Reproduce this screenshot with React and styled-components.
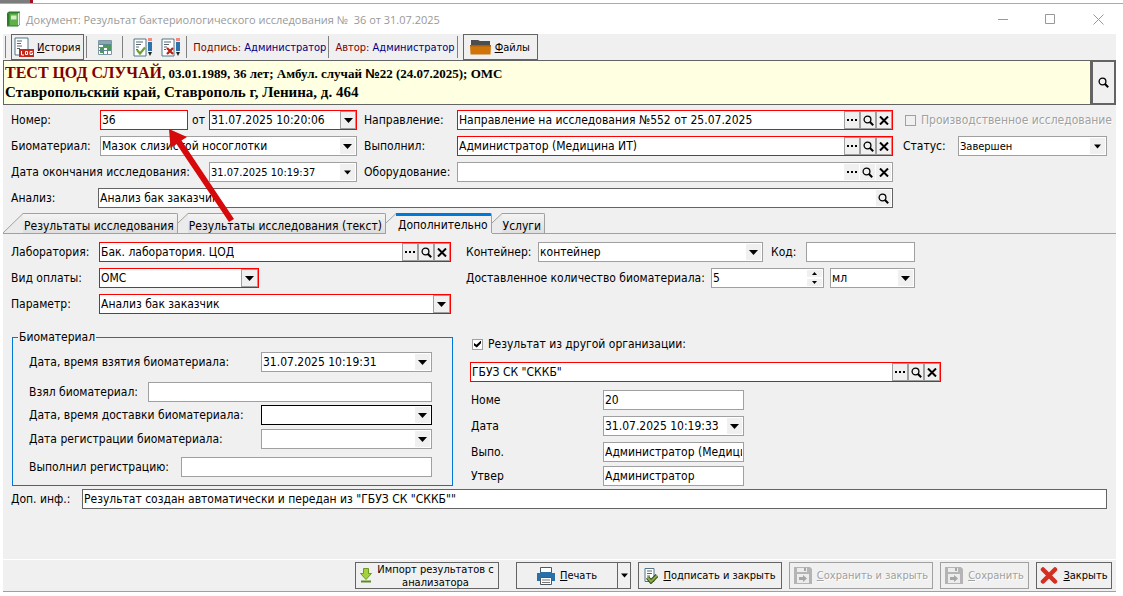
import React, { useState } from 'react'
import styled, { createGlobalStyle } from 'styled-components'

const UI_FONT = 'Tahoma, "DejaVu Sans Condensed", "DejaVu Sans", sans-serif'

const borders = {
    normal: '#a0a0a0',
    required: '#ff0000',
    strong: '#646464',
    focus: '#000000',
}

const ArrowDown = ({ size = 9 }) => (
    <svg width={size} height="5" viewBox="0 0 9 5">
        <path d="M0 0h9L4.500 5z" fill="#000" />
    </svg>
)

const Loupe = () => (
    <svg width="11" height="11" viewBox="0 0 11 11" fill="none" stroke="#000">
        <circle cx="4.500" cy="4.500" r="3.400" strokeWidth="1.300" />
        <path d="M7 7L10.200 10.200" strokeWidth="2" />
    </svg>
)

const Cross = () => (
    <svg width="10" height="9" viewBox="0 0 10 9" fill="none" stroke="#000" strokeWidth="2">
        <path d="M1 0.500L9 8.500M9 0.500L1 8.500" />
    </svg>
)

const Dots = () => (
    <svg width="10" height="4" viewBox="0 0 10 4">
        <path d="M0 1h2v2H0zM4 1h2v2H4zM8 1h2v2H8z" fill="#000" />
    </svg>
)

const BookIcon = () => (
    <svg width="15" height="16" viewBox="0 0 15 16">
        <path d="M1 2l2-1.500h11v13L12 15.500H1z" fill="#2f7d2c" />
        <path d="M12 2.500l1.500-1v12L12 14.500z" fill="#e8f3e4" />
        <path d="M1 2.500h11v12H1z" fill="#5fb04a" />
        <path d="M1 2.500h2.500v12H1z" fill="#2d7a2a" />
        <path d="M5 4.500h5.500v4H5z" fill="#d3efc2" />
    </svg>
)

const LogIcon = () => (
    <svg width="20" height="20" viewBox="0 0 20 20">
        <path d="M1 1h13v17H1z" fill="#fff" stroke="#4f7688" />
        <path d="M3 4h5M3 6.500h4M3 9h5M3 11.500h3" stroke="#59646b" />
        <path d="M5 12h15v8H5z" fill="#c4281c" />
        <path d="M7.500 14v4H10M11.500 14.500h2v3h-2zM18.500 14.500h-2.500v3h2.500V16h-1" fill="none" stroke="#fff" />
    </svg>
)

const TableIcon = () => (
    <svg width="14" height="15" viewBox="0 0 14 15">
        <path d="M0.500 0.500h13v14H0.500z" fill="#fff" stroke="#7d98a3" />
        <path d="M1 1h12v3H1z" fill="#8aa9b5" />
        <path d="M6 5h7v2H6zM2 8h3v2H2zM10 8h3v2h-3zM2 11h3v2H2z" fill="#4b9a57" />
        <path d="M1 4.500h12M1 7.500h12M1 10.500h12M5.500 4v10M9.500 4v10" stroke="#5f8792" />
    </svg>
)

const SheetPenIcon = ({ rejected }) => (
    <svg width="19" height="19" viewBox="0 0 19 19">
        <path d="M1 1h12v17H1z" fill="#fff" stroke="#4f7688" />
        <path d="M3 4h7M3 6.500h5M3 9h3M3 11.500h2" stroke="#59646b" />
        {rejected
            ? <path d="M6 10l6 6M12 10l-6 6" fill="none" stroke="#b52218" strokeWidth="2.200" />
            : <path d="M4 12l3 3.500L12 9.500" fill="none" stroke="#6d9f38" strokeWidth="2.200" />}
        <path d="M15 0h4v3h-4z" fill="#ef8b80" />
        <path d="M15 4h4v9h-4z" fill="#2c73ad" />
        <path d="M15 14h4l-2 4z" fill="#222" />
    </svg>
)

const FolderIcon = () => (
    <svg width="21" height="16" viewBox="0 0 21 16">
        <path d="M1 1h7l2 1h10V14H1z" fill="#4d4d4d" />
        <path d="M0 6h21L20.500 15.500H0.500z" fill="#cf7408" />
        <path d="M0 6h21v1.500H0z" fill="#a8600e" />
    </svg>
)

const ImportIcon = () => (
    <svg width="12" height="15" viewBox="0 0 12 15">
        <path d="M3.500 0.500h5v5h3L6 11.500 0.500 5.500h3z" fill="#a6d13f" stroke="#6b9a23" />
        <path d="M1 13.500h10" stroke="#5b8f22" strokeWidth="2" />
    </svg>
)

const PrinterIcon = () => (
    <svg width="18" height="18" viewBox="0 0 18 18">
        <path d="M3.500 0.500h11v6h-11z" fill="#fff" stroke="#4d5960" />
        <path d="M0 6h3v-1h12v1h3v8H0z" fill="#2a70a8" />
        <path d="M3.500 10.500h11v7h-11z" fill="#fff" stroke="#4d5960" />
        <path d="M5 13h8M5 15.500h8" stroke="#777" />
    </svg>
)

const SignIcon = () => (
    <svg width="14" height="16" viewBox="0 0 14 16">
        <path d="M1 0.500h9v13H1z" fill="#fff" stroke="#4f7688" />
        <path d="M3 3h5M3 5.500h5M3 8h3" stroke="#59646b" />
        <path d="M3.500 9.500L7 13.500l6-6" fill="none" stroke="#33461d" strokeWidth="4" />
        <path d="M3.500 9.500L7 13.500l6-6" fill="none" stroke="#85ae45" strokeWidth="2" />
    </svg>
)

const DiskIcon = () => (
    <svg width="18" height="17" viewBox="0 0 18 17">
        <path d="M0 0h16l2 2v15H0z" fill="#b4b4b4" />
        <path d="M3 1h10v4H3zM3 7h12v9H3z" fill="#ececec" />
        <path d="M10 1h2v3h-2z" fill="#a5a5a5" />
        <path d="M5 10h4V8l4 3.500L9 15v-2H5z" fill="#a5a5a5" />
    </svg>
)

const CloseIcon = () => (
    <svg width="18" height="17" viewBox="0 0 18 17">
        <path d="M3 2.500L15 14.500M15 2.500L3 14.500" fill="none" stroke="#d33022" strokeWidth="4.500" strokeLinecap="round" />
    </svg>
)

const Lookup = ({ id, defaultValue = '', kind = 'normal', flat, single }) => (
    <Box $kind={kind}>
        <Input id={id} type="text" defaultValue={defaultValue} />
        {!single && <BoxButton type="button" aria-label="Выбрать" $flat={flat}><Dots /></BoxButton>}
        <BoxButton type="button" aria-label="Найти" $flat={flat}><Loupe /></BoxButton>
        {!single && <BoxButton type="button" aria-label="Очистить" $flat={flat}><Cross /></BoxButton>}
    </Box>
)

const DateField = ({ id, defaultValue = '', kind = 'normal', width, small }) => (
    <Box $kind={kind} $width={width}>
        <Input id={id} type="text" defaultValue={defaultValue} $small={small} />
        <BoxButton type="button" aria-label="Календарь" $flat={kind !== 'required'}><ArrowDown size={small ? 7 : 9} /></BoxButton>
    </Box>
)

const Combo = ({ id, value, kind = 'normal', width, small, label }) => (
    <ComboBox $kind={kind} $width={width}>
        <Select id={id} defaultValue={value} $small={small} aria-label={label}>
            <option>{value}</option>
        </Select>
        <ComboArrow $flat={kind !== 'required'}><ArrowDown size={small ? 7 : 9} /></ComboArrow>
    </ComboBox>
)

const TextField = ({ id, defaultValue = '', kind = 'normal', width }) => (
    <Box $kind={kind} $width={width}>
        <Input id={id} type="text" defaultValue={defaultValue} />
    </Box>
)

const tabs = ['Результаты исследования', 'Результаты исследования (текст)', 'Дополнительно', 'Услуги']

const App = () => {
    const [tab, setTab] = useState(2)
    const [external, setExternal] = useState(true)

    return (
        <>
            <GlobalStyle />
            <Page>
                <Backdrop><BackdropDark /><BackdropRed /></Backdrop>
                <TitleBar>
                    <BookIcon />
                    <Title>Документ: Результат бактериологического исследования №&nbsp; 36 от 31.07.2025</Title>
                    <WindowButton type="button" aria-label="Свернуть">
                        <svg width="11" height="11" viewBox="0 0 11 11"><path d="M0 5.500h10" stroke="#999" /></svg>
                    </WindowButton>
                    <WindowButton type="button" aria-label="Развернуть">
                        <svg width="11" height="11" viewBox="0 0 11 11"><path d="M0.500 0.500h9v9H0.500z" fill="none" stroke="#999" /></svg>
                    </WindowButton>
                    <WindowButton type="button" aria-label="Закрыть окно">
                        <svg width="11" height="11" viewBox="0 0 11 11"><path d="M0.500 0.500l10 10M10.500 0.500l-10 10" stroke="#999" /></svg>
                    </WindowButton>
                </TitleBar>

                <Body>
                    <Toolbar>
                        <Separator />
                        <ToolButton type="button"><LogIcon /><span><u>И</u>стория</span></ToolButton>
                        <Separator />
                        <IconButton type="button" aria-label="Таблица" $wide><TableIcon /></IconButton>
                        <Separator />
                        <IconGroup>
                            <IconButton type="button" aria-label="Подписать"><SheetPenIcon /></IconButton>
                            <IconButton type="button" aria-label="Снять подпись"><SheetPenIcon rejected /></IconButton>
                        </IconGroup>
                        <Separator />
                        <Person><b>Подпись:</b> Администратор</Person>
                        <Separator />
                        <Person><b>Автор:</b> Администратор</Person>
                        <Separator />
                        <ToolButton type="button"><FolderIcon /><span><u>Ф</u>айлы</span></ToolButton>
                    </Toolbar>

                    <PatientBar>
                        <Patient>
                            <PatientLine>
                                <PatientName>ТЕСТ ЦОД СЛУЧАЙ</PatientName>, 03.01.1989, 36 лет; Амбул. случай <NumberSign>№</NumberSign>22 (24.07.2025); ОМС
                            </PatientLine>
                            <Address>Ставропольский край, Ставрополь г, Ленина, д. 464</Address>
                        </Patient>
                        <PatientSearch type="button" aria-label="Найти пациента"><Loupe /></PatientSearch>
                    </PatientBar>

                    <Header>
                        <HeaderMain>
                            <HeaderColumns>
                                <Column>
                                    <Row>
                                        <Label htmlFor="number" $width={89}>Номер:</Label>
                                        <TextField id="number" defaultValue="36" kind="required" />
                                        <Between htmlFor="date">от</Between>
                                        <DateField id="date" defaultValue="31.07.2025 10:20:06" kind="required" width={148} />
                                    </Row>
                                    <Row>
                                        <Label htmlFor="material" $width={89}>Биоматериал:</Label>
                                        <Combo id="material" value="Мазок слизистой носоглотки" />
                                    </Row>
                                    <Row>
                                        <Label htmlFor="finished" $width={198}>Дата окончания исследования:</Label>
                                        <DateField id="finished" defaultValue="31.07.2025 10:19:37" small />
                                    </Row>
                                </Column>
                                <Column>
                                    <Row>
                                        <Label htmlFor="referral" $width={93}>Направление:</Label>
                                        <Lookup id="referral" defaultValue="Направление на исследования №552 от 25.07.2025" kind="required" />
                                    </Row>
                                    <Row>
                                        <Label htmlFor="performer" $width={93}>Выполнил:</Label>
                                        <Lookup id="performer" defaultValue="Администратор (Медицина ИТ)" kind="required" />
                                    </Row>
                                    <Row>
                                        <Label htmlFor="equipment" $width={93}>Оборудование:</Label>
                                        <Lookup id="equipment" flat />
                                    </Row>
                                </Column>
                            </HeaderColumns>
                            <Row>
                                <Label htmlFor="analysis" $width={87}>Анализ:</Label>
                                <Lookup id="analysis" defaultValue="Анализ бак заказчик" kind="strong" flat single />
                            </Row>
                        </HeaderMain>
                        <HeaderSide>
                            <Row>
                                <CheckLabel $disabled>
                                    <Checkbox type="checkbox" disabled />
                                    Производственное исследование
                                </CheckLabel>
                            </Row>
                            <Row>
                                <Label htmlFor="status" $width={55}>Статус:</Label>
                                <Combo id="status" value="Завершен" width={149} small />
                            </Row>
                        </HeaderSide>
                    </Header>

                    <TabList role="tablist">
                        {tabs.map((name, i) => (
                            <Tab key={name} type="button" role="tab" aria-selected={i === tab} onClick={() => setTab(i)}>
                                <svg width={i === 0 ? 20 : 10} viewBox={i === 0 ? '0 0 20 20' : '0 0 10 20'} height="20">
                                    <path d={i === 0 ? 'M0 20L20 0V20z' : 'M0 10L10 0V20H0z'} fill={i === tab ? '#f0f0f0' : '#ebebeb'} />
                                    <path d={i === 0 ? 'M0 20L20 0.500' : 'M0 10L10 0.500'} stroke="#a0a0a0" fill="none" />
                                </svg>
                                <TabText $active={i === tab}>{name}</TabText>
                            </Tab>
                        ))}
                        <TabRest />
                    </TabList>

                    <Panel>
                        <PanelColumns>
                            <PanelLeft>
                                <Column>
                                    <Row>
                                        <Label htmlFor="lab" $width={88}>Лаборатория:</Label>
                                        <Lookup id="lab" defaultValue="Бак. лаборатория. ЦОД" kind="required" />
                                    </Row>
                                    <Row>
                                        <Label htmlFor="payment" $width={88}>Вид оплаты:</Label>
                                        <Combo id="payment" value="ОМС" kind="required" width={160} />
                                    </Row>
                                    <Row>
                                        <Label htmlFor="parameter" $width={88}>Параметр:</Label>
                                        <Combo id="parameter" value="Анализ бак заказчик" kind="required" />
                                    </Row>
                                </Column>
                                <Group>
                                    <legend>Биоматериал</legend>
                                    <Row>
                                        <Label htmlFor="taken" $width={232}>Дата, время взятия биоматериала:</Label>
                                        <DateField id="taken" defaultValue="31.07.2025 10:19:31" />
                                    </Row>
                                    <Row $space={10}>
                                        <Label htmlFor="takenBy" $width={119}>Взял биоматериал:</Label>
                                        <TextField id="takenBy" />
                                    </Row>
                                    <Row $space={3}>
                                        <Label htmlFor="delivered" $width={232}>Дата, время доставки биоматериала:</Label>
                                        <DateField id="delivered" kind="focus" />
                                    </Row>
                                    <Row $space={4}>
                                        <Label htmlFor="registered" $width={232}>Дата регистрации биоматериала:</Label>
                                        <DateField id="registered" />
                                    </Row>
                                    <Row $space={8}>
                                        <Label htmlFor="registeredBy" $width={152}>Выполнил регистрацию:</Label>
                                        <TextField id="registeredBy" />
                                    </Row>
                                </Group>
                            </PanelLeft>

                            <PanelRight>
                                <Column>
                                    <Row>
                                        <Label htmlFor="container" $width={72}>Контейнер:</Label>
                                        <Combo id="container" value="контейнер" width={225} />
                                        <Label htmlFor="code" $width={43} $inset>Код:</Label>
                                        <TextField id="code" width={109} />
                                    </Row>
                                    <Row>
                                        <Label htmlFor="amount" $width={245}>Доставленное количество биоматериала:</Label>
                                        <Box $kind="normal" $width={113}>
                                            <Input id="amount" type="text" inputMode="numeric" defaultValue="5" />
                                            <Spin>
                                                <button type="button" aria-label="Больше"><svg width="5" height="3" viewBox="0 0 5 3"><path d="M0 3h5L2.500 0z" /></svg></button>
                                                <button type="button" aria-label="Меньше"><svg width="5" height="3" viewBox="0 0 5 3"><path d="M0 0h5L2.500 3z" /></svg></button>
                                            </Spin>
                                        </Box>
                                        <UnitGap />
                                        <Combo id="unit" value="мл" width={85} label="Единица измерения" />
                                    </Row>
                                </Column>
                                <External>
                                    <CheckLabel>
                                        <Checkbox type="checkbox" checked={external} onChange={(e) => setExternal(e.target.checked)} />
                                        Результат из другой организации:
                                    </CheckLabel>
                                    <Row $space={8}>
                                        <Lookup id="organization" defaultValue={'ГБУЗ СК "СККБ"'} kind="required" />
                                    </Row>
                                    <Row $space={8}>
                                        <ShortLabel htmlFor="extNumber">Номе</ShortLabel>
                                        <TextField id="extNumber" defaultValue="20" width={141} />
                                    </Row>
                                    <Row $space={6}>
                                        <ShortLabel htmlFor="extDate">Дата</ShortLabel>
                                        <DateField id="extDate" defaultValue="31.07.2025 10:19:33" width={141} />
                                    </Row>
                                    <Row $space={6}>
                                        <ShortLabel htmlFor="extPerformer">Выпо.</ShortLabel>
                                        <TextField id="extPerformer" defaultValue="Администратор (Медицина ИТ)" width={141} />
                                    </Row>
                                    <Row $space={4}>
                                        <ShortLabel htmlFor="extApproved">Утвер</ShortLabel>
                                        <TextField id="extApproved" defaultValue="Администратор" width={141} />
                                    </Row>
                                </External>
                            </PanelRight>
                        </PanelColumns>
                        <Row>
                            <Label htmlFor="extra" $width={71}>Доп. инф.:</Label>
                            <TextField id="extra" defaultValue={'Результат создан автоматически и передан из "ГБУЗ СК "СККБ""'} kind="strong" />
                        </Row>
                    </Panel>

                    <Footer>
                        <FooterButton type="button" $width={144}>
                            <ImportIcon />
                            <TwoLines>Импорт результатов с анализатора</TwoLines>
                        </FooterButton>
                        <Split>
                            <FooterButton type="button" $width={102}><PrinterIcon /><span><u>П</u>ечать</span></FooterButton>
                            <SplitArrow type="button" aria-label="Варианты печати"><ArrowDown size={7} /></SplitArrow>
                        </Split>
                        <FooterButton type="button" $width={144}><SignIcon /><span><u>П</u>одписать и закрыть</span></FooterButton>
                        <FooterButton type="button" disabled $width={144}><DiskIcon /><span><u>С</u>охранить и закрыть</span></FooterButton>
                        <FooterButton type="button" disabled $width={89}><DiskIcon /><span><u>С</u>охранить</span></FooterButton>
                        <FooterButton type="button" $width={76}><CloseIcon /><span><u>З</u>акрыть</span></FooterButton>
                    </Footer>
                </Body>

                <Pointer width="70" height="98" viewBox="0 0 70 98">
                    <path d="M4 4L22 12 16.500 15.500 69 94 64 97 11.500 19 5.500 23z" fill="#d60a0a" />
                </Pointer>
            </Page>
        </>
    )
}

export default App

const GlobalStyle = createGlobalStyle`
    * {
        box-sizing: border-box;
    }
    body {
        margin: 0;
        background: #fff;
        font-family: ${UI_FONT};
        font-size: 12px;
        color: #000;
    }
    button, input, select {
        font-family: inherit;
        font-size: inherit;
        color: inherit;
        margin: 0;
        padding: 0;
        border: none;
        border-radius: 0;
        background: none;
    }
    svg {
        display: block;
        flex: none;
    }
`
const Page = styled.div`
    position: relative;
    min-height: 100vh;
    display: flex;
    flex-direction: column;
    padding: 0 7px 4px 3px;
`
const Backdrop = styled.div`
    display: flex;
    height: 4px;
    margin: 0 -7px 0 -3px;
    border-bottom: 1px solid #aaa;
`
const BackdropDark = styled.div`
    width: 30px;
    background: #7c7c7c;
`
const BackdropRed = styled.div`
    width: 3px;
    background: #a01020;
`
const TitleBar = styled.header`
    height: 30px;
    display: flex;
    align-items: center;
    padding-left: 3px;
`
const Title = styled.h1`
    flex: 1;
    margin: 0 0 0 5px;
    font-family: "Segoe UI", "Open Sans", sans-serif;
    font-size: 11px;
    font-weight: normal;
    color: #999;
    white-space: nowrap;
`
const WindowButton = styled.button`
    width: 47px;
    height: 30px;
    display: flex;
    align-items: center;
    justify-content: center;
    &:last-child {
        width: 36px;
        margin-left: 6px;
    }
`
const Body = styled.main`
    flex: 1;
    display: flex;
    flex-direction: column;
    background: #f0f0f0;
    border-bottom: 1px solid #a0a0a0;
`
const Toolbar = styled.div`
    height: 26px;
    display: flex;
    align-items: center;
    padding-left: 2px;
    font-size: 11px;
`
const Separator = styled.div`
    width: 1px;
    height: 22px;
    background: #808080;
`
const ToolButton = styled.button`
    height: 26px;
    display: flex;
    align-items: center;
    gap: 3px;
    margin: 0 2px 0 5px;
    padding: 0 3px 0 2px;
    border: 1px solid #646464;
    &:last-child {
        gap: 4px;
        padding: 0 7px 0 6px;
    }
`
const IconGroup = styled.div`
    display: flex;
    padding: 0 2px 0 5px;
`
const IconButton = styled.button`
    height: 26px;
    width: ${(p) => (p.$wide ? 35 : 28)}px;
    display: flex;
    align-items: center;
    justify-content: center;
`
const Person = styled.div`
    padding: 0 2px 0 6px;
    color: #000080;
    white-space: pre;
    b {
        font-weight: normal;
        color: #800000;
    }
`
const PatientBar = styled.div`
    display: flex;
    height: 45px;
`
const Patient = styled.div`
    flex: 1;
    background: #ffffe1;
    border: 1px solid #646464;
    padding: 2px 1px;
    font-family: "Times New Roman", "Liberation Serif", serif;
    font-weight: bold;
    white-space: nowrap;
`
const PatientLine = styled.div`
    font-size: 13px;
    line-height: 20px;
`
const PatientName = styled.span`
    font-size: 16px;
    color: #800000;
`
const NumberSign = styled.span`
    font-family: Arial, "Liberation Sans", sans-serif;
`
const Address = styled.div`
    font-size: 15px;
    line-height: 16px;
`
const PatientSearch = styled.button`
    width: 25px;
    display: flex;
    align-items: center;
    justify-content: center;
    border: 2px solid #646464;
`
const Header = styled.section`
    display: flex;
    gap: 10px;
    padding: 5px 4px 0 8px;
`
const HeaderMain = styled.div`
    flex: 1;
    display: flex;
    flex-direction: column;
    gap: 6px;
`
const HeaderColumns = styled.div`
    display: grid;
    grid-template-columns: 346px 1fr;
    gap: 7px;
`
const HeaderSide = styled.div`
    width: 209px;
    display: flex;
    flex-direction: column;
    gap: 6px;
`
const Column = styled.div`
    display: flex;
    flex-direction: column;
    gap: 6px;
    min-width: 0;
`
const Row = styled.div`
    display: flex;
    align-items: center;
    height: 20px;
    margin-top: ${(p) => p.$space || 0}px;
`
const Label = styled.label`
    flex: none;
    width: ${(p) => p.$width}px;
    padding-left: ${(p) => (p.$inset ? 8 : 0)}px;
    white-space: nowrap;
`
const Between = styled.label`
    padding: 0 4px;
`
const Box = styled.div`
    flex: ${(p) => (p.$width ? `0 1 ${p.$width}px` : '1 1 0')};
    min-width: 0;
    height: 20px;
    display: flex;
    align-items: stretch;
    background: #fff;
    border: 1px solid ${(p) => borders[p.$kind]};
`
const Input = styled.input`
    flex: 1;
    min-width: 0;
    width: 100%;
    padding: 0 1px;
    font-size: ${(p) => (p.$small ? 11 : 12)}px;
    outline: none;
`
const BoxButton = styled.button`
    flex: none;
    width: ${(p) => (p.$flat ? 15 : 16)}px;
    margin: ${(p) => (p.$flat ? '1px 1px 1px 0' : 0)};
    display: flex;
    align-items: center;
    justify-content: center;
    background: #f0f0f0;
    border: ${(p) => (p.$flat ? 'none' : '1px solid #a0a0a0')};
`
const ComboBox = styled.div`
    flex: ${(p) => (p.$width ? `0 1 ${p.$width}px` : '1 1 0')};
    min-width: 0;
    height: 20px;
    display: grid;
    background: #fff;
    border: 1px solid ${(p) => borders[p.$kind]};
    > * {
        grid-area: 1 / 1;
    }
`
const Select = styled.select`
    appearance: none;
    width: 100%;
    padding: 0 18px 0 1px;
    font-size: ${(p) => (p.$small ? 11 : 12)}px;
    outline: none;
`
const ComboArrow = styled.span`
    justify-self: end;
    width: ${(p) => (p.$flat ? 15 : 17)}px;
    margin: ${(p) => (p.$flat ? 1 : 0)}px;
    display: flex;
    align-items: center;
    justify-content: center;
    pointer-events: none;
    background: #f0f0f0;
    border: ${(p) => (p.$flat ? 'none' : '1px solid #a0a0a0')};
`
const CheckLabel = styled.label`
    display: flex;
    align-items: center;
    gap: 5px;
    height: 20px;
    white-space: nowrap;
    color: ${(p) => (p.$disabled ? '#a0a0a0' : '#000')};
    text-shadow: ${(p) => (p.$disabled ? '1px 1px 0 #fff' : 'none')};
`
const Checkbox = styled.input`
    appearance: none;
    flex: none;
    width: 11px;
    height: 11px;
    margin: 0 0 0 2px;
    background: ${(p) => (p.disabled ? '#f0f0f0' : '#fff')};
    border: 1px solid #a0a0a0;
    display: grid;
    place-items: center;
    &:checked::before {
        content: "";
        width: 7px;
        height: 7px;
        background: #000;
        clip-path: polygon(0 35%, 35% 60%, 100% 0, 100% 40%, 40% 100%, 0 70%);
    }
`
const TabList = styled.div`
    display: flex;
    align-items: flex-end;
    height: 21px;
    margin-top: 5px;
`
const Tab = styled.button`
    display: flex;
    height: 21px;
    border-bottom: 1px solid #a0a0a0;
    &[aria-selected="true"] {
        border-bottom-color: #f0f0f0;
    }
`
const TabText = styled.span`
    height: 20px;
    padding: ${(p) => (p.$active ? '0 3px 0 2px' : '2px 3px 0 1px')};
    line-height: ${(p) => (p.$active ? 18 : 20)}px;
    white-space: nowrap;
    background: ${(p) => (p.$active ? '#f0f0f0' : 'linear-gradient(#f4f4f4, #dedede)')};
    border-top: ${(p) => (p.$active ? '3px solid #0078d7' : '1px solid #a0a0a0')};
    border-right: 1px solid #a0a0a0;
    border-top-right-radius: 2px;
`
const TabRest = styled.div`
    flex: 1;
    border-bottom: 1px solid #a0a0a0;
`
const Panel = styled.section`
    flex: 1;
    padding: 8px 9px 10px 8px;
`
const PanelColumns = styled.div`
    display: grid;
    grid-template-columns: 442px minmax(0, 475px);
    column-gap: 13px;
    margin-bottom: 3px;
`
const PanelLeft = styled.div`
    > ${Column} {
        padding-right: 2px;
    }
`
const Group = styled.fieldset`
    margin: 16px 0 0 1px;
    padding: 8px 20px 8px 16px;
    border: 1px solid #0078d7;
    legend {
        margin-left: -11px;
        padding: 0 1px;
        line-height: 14px;
    }
`
const PanelRight = styled.div`
    min-width: 0;
`
const Spin = styled.div`
    width: 15px;
    margin: 1px;
    display: flex;
    flex-direction: column;
    gap: 2px;
    button {
        flex: 1;
        display: flex;
        align-items: center;
        justify-content: center;
        background: #f0f0f0;
    }
`
const UnitGap = styled.div`
    width: 6px;
`
const External = styled.div`
    margin-top: 46px;
    padding-left: 4px;
`
const ShortLabel = styled.label`
    flex: none;
    width: 133px;
    padding-left: 1px;
`
const Footer = styled.footer`
    display: flex;
    justify-content: flex-end;
    gap: 7px;
    padding: 2px 4px;
    border-top: 1px solid #fff;
    font-size: 11px;
`
const FooterButton = styled.button`
    width: ${(p) => p.$width}px;
    height: 27px;
    display: flex;
    align-items: center;
    justify-content: center;
    gap: 5px;
    white-space: nowrap;
    border: 1px solid #646464;
    &:disabled {
        color: #a0a0a0;
        border-color: #a0a0a0;
        text-shadow: 1px 1px 0 #fff;
    }
`
const TwoLines = styled.span`
    width: 118px;
    white-space: normal;
    line-height: 13px;
`
const Split = styled.div`
    display: flex;
    margin-left: 10px;
`
const SplitArrow = styled.button`
    width: 13px;
    display: flex;
    align-items: center;
    justify-content: center;
    border: 1px solid #646464;
    border-left: none;
`
const Pointer = styled.svg`
    position: absolute;
    left: 165px;
    top: 125px;
    pointer-events: none;
`
